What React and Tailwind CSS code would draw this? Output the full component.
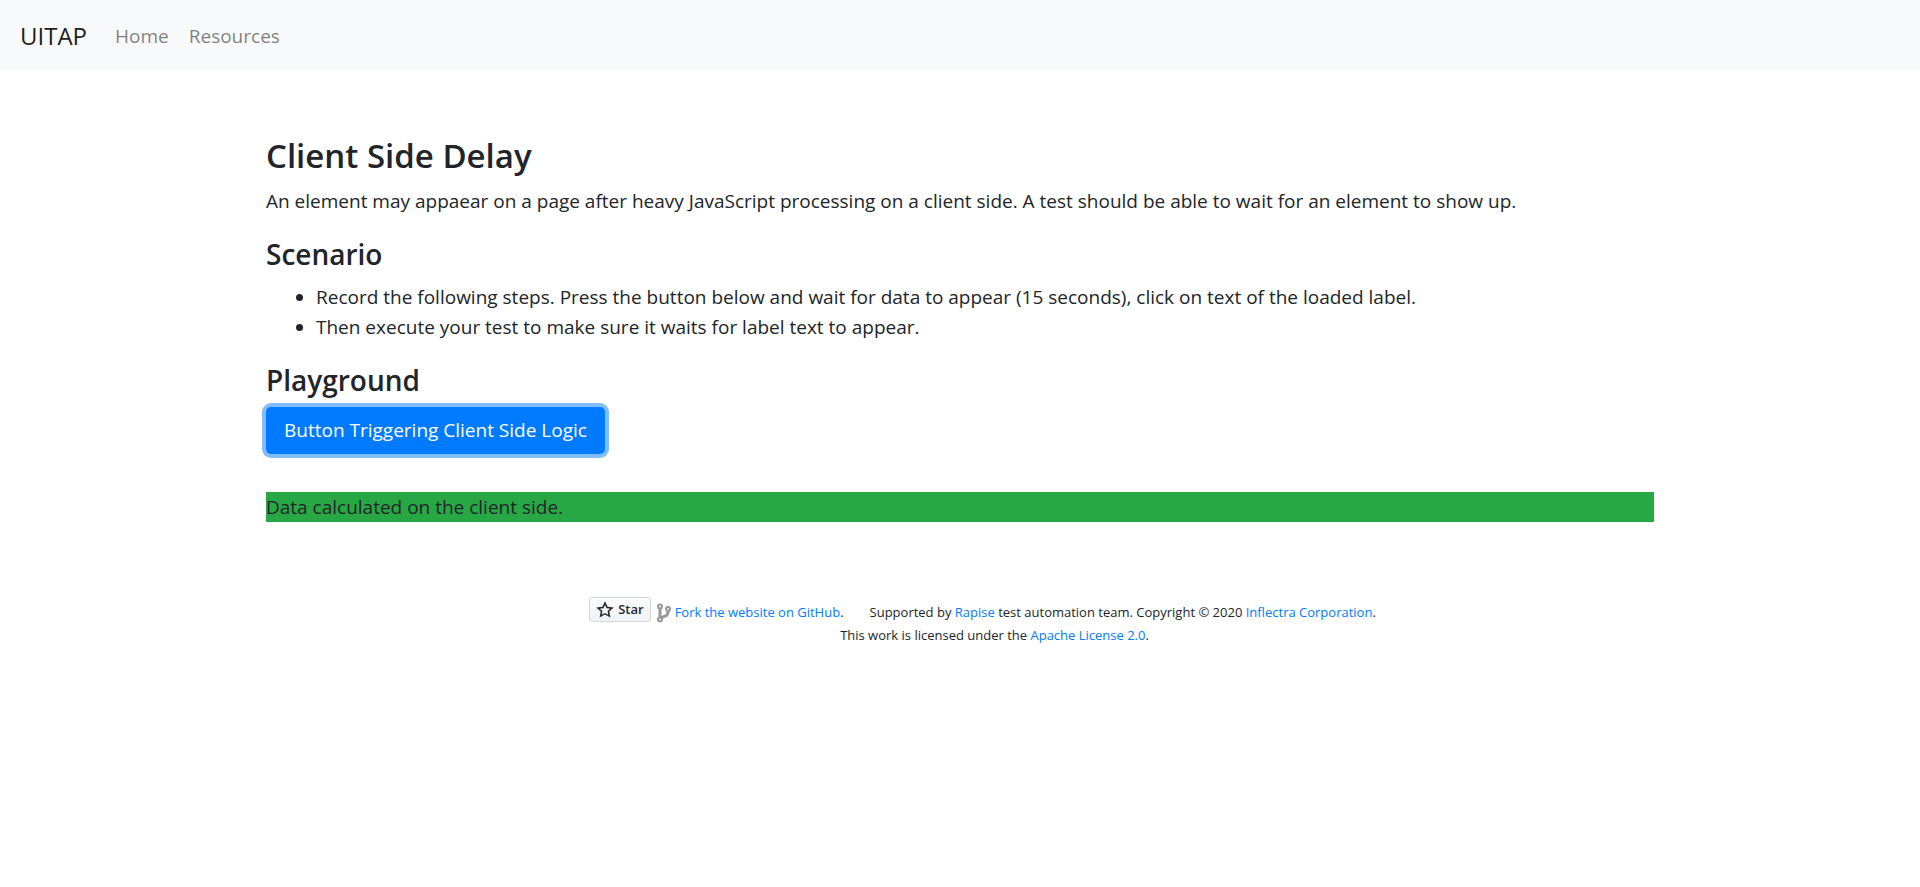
import React from "react";

const link = "text-[#007bff] hover:underline";

function StarIcon() {
  return (
    <svg viewBox="0 0 14 16" className="h-5 w-[18px]" fill="currentColor" aria-hidden="true">
      <path
        fillRule="evenodd"
        d="M14 6l-4.900-.640L7 1 4.900 5.360 0 6l3.600 3.260L2.670 14 7 11.670 11.330 14l-.930-4.740L14 6zM7 10.300l-2.600 1.400.560-2.850L2.800 6.900l2.940-.380L7 3.900l1.260 2.620 2.940.380-2.160 1.950.560 2.850L7 10.300z"
      />
    </svg>
  );
}

function ForkIcon() {
  return (
    <svg viewBox="0 0 14 20" className="h-5 w-[14px]" fill="none" stroke="#999999" aria-hidden="true">
      <path d="M3 5.500v9M11 8v1.200c0 3.300-2 3.800-4.500 4.500C4.600 14.300 3.400 14.800 3 16" strokeWidth="3" />
      <g fill="#f4f4f4" strokeWidth="2">
        <circle cx="3" cy="3.500" r="2" />
        <circle cx="3" cy="16.500" r="2" />
        <circle cx="11" cy="6" r="2" />
      </g>
    </svg>
  );
}

export default function App() {
  return (
    <div className="bg-white font-['Open_Sans','Noto_Sans',sans-serif] text-[19px] leading-[30px] text-[#212529]">
      <nav className="flex h-[70px] items-center bg-[#f8f9fa] px-5 pt-[2px]">
        <a href="#" className="mr-7 text-2xl text-black/90">UITAP</a>
        <a href="#home" className="mr-5 text-black/50">Home</a>
        <a href="#resources" className="text-black/50">Resources</a>
      </nav>

      <main className="mx-auto max-w-[1426px] px-[19px] pt-[65px]">
        <h3 className="mb-[9px] text-[33px] leading-[42px] font-semibold">Client Side Delay</h3>
        <p className="mb-5">
          An element may appaear on a page after heavy JavaScript processing on a client side. A test should be able to
          wait for an element to show up.
        </p>

        <h4 className="mb-[10px] text-[28px] leading-9 font-semibold">Scenario</h4>
        <ul className="mb-5 list-disc pl-[50px]">
          <li>
            Record the following steps. Press the button below and wait for data to appear (15 seconds), click on text
            of the loaded label.
          </li>
          <li>Then execute your test to make sure it waits for label text to appear.</li>
        </ul>

        <h4 className="mb-[9px] text-[28px] leading-9 font-semibold">Playground</h4>
        <button
          type="button"
          className="block rounded-[5px] bg-[#007bff] px-[18px] py-2 leading-[31px] text-white shadow-[0_0_0_4px_rgba(0,123,255,0.5)]"
        >
          Button Triggering Client Side Logic
        </button>
        <p className="mt-[38px] bg-[#28a745]">Data calculated on the client side.</p>
      </main>

      <footer className="flex flex-col items-center pt-[75px] text-[13px] leading-[23px]">
        <div className="flex items-start pl-[45px]">
          <button
            type="button"
            className="mr-[6px] flex h-[25px] items-center gap-1 rounded-[3px] border border-[#d5d8da] bg-linear-to-b from-[#fafbfc] to-[#eff3f6] px-[6px] font-semibold text-[#24292e]"
          >
            <StarIcon />
            Star
          </button>
          <div className="flex items-center pt-1">
            <ForkIcon />
            <span className="ml-1">
              <a href="#github" className={link}>Fork the website on GitHub</a>.
            </span>
            <span className="ml-[26px]">
              Supported by <a href="#rapise" className={link}>Rapise</a> test automation team. Copyright © 2020{" "}
              <a href="#inflectra" className={link}>Inflectra Corporation</a>.
            </span>
          </div>
        </div>
        <div className="pl-[69px]">
          This work is licensed under the <a href="#license" className={link}>Apache License 2.0</a>.
        </div>
      </footer>
    </div>
  );
}
